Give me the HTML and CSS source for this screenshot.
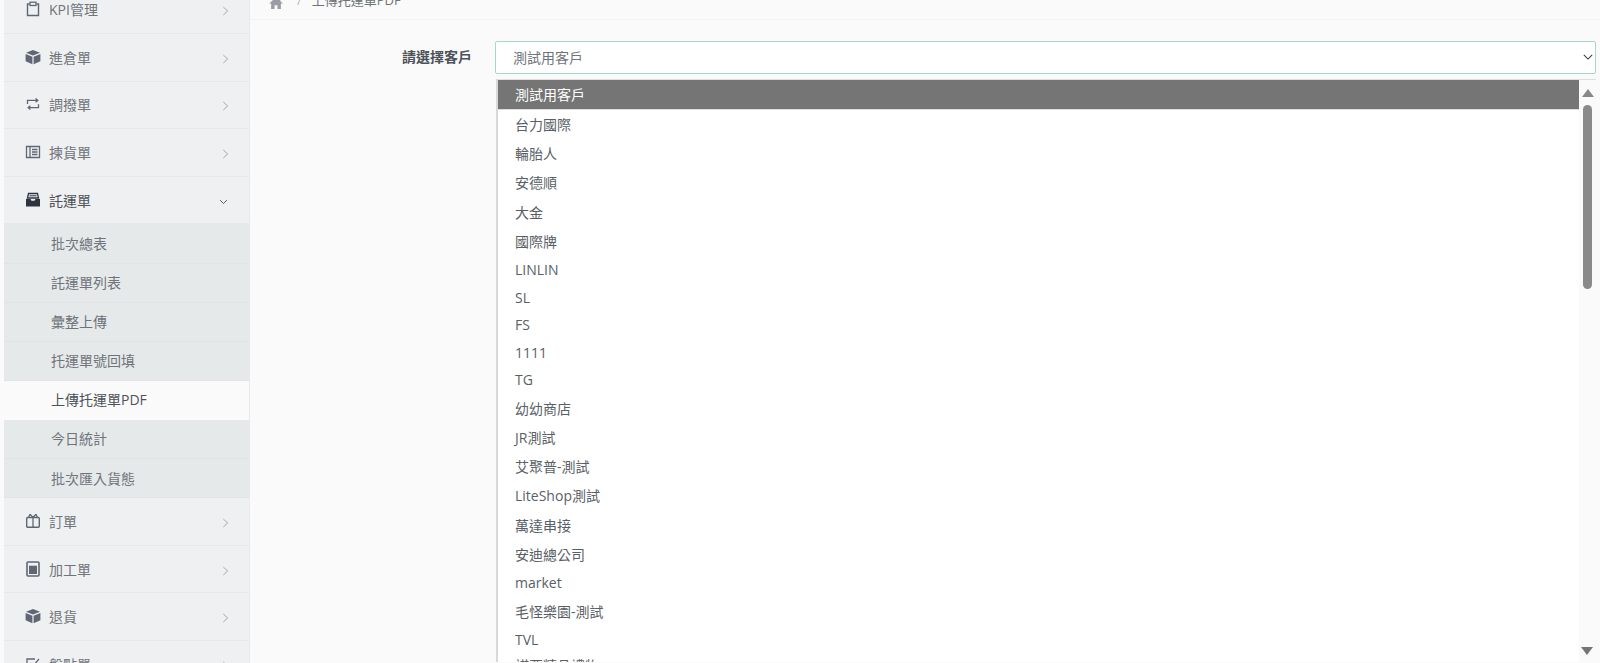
FILE: index.html
```html
<!DOCTYPE html>
<html lang="zh-Hant">
<head>
<meta charset="utf-8">
<title>上傳托運單PDF</title>
<link rel="stylesheet" href="styles.css">
</head>
<body>
<div class="app">
  <aside class="sidebar">
    <div class="menu">
      <a class="item"><svg class="ico" viewBox="0 0 16 16"><path d="M4.500 3H2.500v11.500h11V3h-2" fill="none" stroke="currentColor" stroke-width="1.400"/><rect x="5" y="1.200" width="6" height="3.300" fill="none" stroke="currentColor" stroke-width="1.300"/></svg><span class="lab">KPI管理</span><svg class="chev" viewBox="0 0 8 12"><path d="M1.500 1.500 6.500 6l-5 4.500"/></svg></a>
      <a class="item"><svg class="ico" viewBox="0 0 16 16"><path d="M8 1 15 3.800 8 6.600 1 3.800zM.6 5l6.800 2.800v7.400L.6 12.300zM15.400 5 8.600 7.800v7.400l6.800-2.900z" fill="currentColor"/></svg><span class="lab">進倉單</span><svg class="chev" viewBox="0 0 8 12"><path d="M1.500 1.500 6.500 6l-5 4.500"/></svg></a>
      <a class="item"><svg class="ico" viewBox="0 0 16 16"><path d="M2.500 8V4.400h10M10.600 2.600l2.200 1.800-2.200 1.800M13.500 8.200v3.400h-10M5.400 9.800l-2.200 1.800 2.200 1.800" fill="none" stroke="currentColor" stroke-width="1.300"/></svg><span class="lab">調撥單</span><svg class="chev" viewBox="0 0 8 12"><path d="M1.500 1.500 6.500 6l-5 4.500"/></svg></a>
      <a class="item"><svg class="ico" viewBox="0 0 16 16"><path d="M5 2.500h9.500v11H5zM5 2.500H1.500v11H5M7 5.500h5.500M7 8h5.500M7 10.500h5.500" fill="none" stroke="currentColor" stroke-width="1.300"/></svg><span class="lab">揀貨單</span><svg class="chev" viewBox="0 0 8 12"><path d="M1.500 1.500 6.500 6l-5 4.500"/></svg></a>
      <a class="item open"><svg class="ico" viewBox="0 0 16 16"><path d="M3.500 1.500h9l1 4.500h-11z" fill="none" stroke="currentColor" stroke-width="1.300"/><path d="M1 7h4.500l1 1.800h3l1-1.800H15v7.500H1z" fill="currentColor"/><path d="M4.500 3.800h7" stroke="currentColor" stroke-width="1"/></svg><span class="lab">託運單</span><svg class="chev down" viewBox="0 0 12 8"><path d="M1.500 1.500 6 6l4.500-4.500"/></svg></a>
      <div class="sub">
        <a class="subitem">批次總表</a>
        <a class="subitem">託運單列表</a>
        <a class="subitem">彙整上傳</a>
        <a class="subitem">托運單號回填</a>
        <a class="subitem active">上傳托運單PDF</a>
        <a class="subitem">今日統計</a>
        <a class="subitem">批次匯入貨態</a>
      </div>
      <a class="item"><svg class="ico" viewBox="0 0 16 16"><rect x="1.700" y="4.500" width="12.600" height="9.800" rx="1" fill="none" stroke="currentColor" stroke-width="1.400"/><path d="M8 3v11.300M8 4.500 5 1.300M8 4.500l3-3.200M5 1.300 3.500 4.500M11 1.300l1.500 3.200" fill="none" stroke="currentColor" stroke-width="1.300"/></svg><span class="lab">訂單</span><svg class="chev" viewBox="0 0 8 12"><path d="M1.500 1.500 6.500 6l-5 4.500"/></svg></a>
      <a class="item"><svg class="ico" viewBox="0 0 16 16"><rect x="2" y="1" width="12" height="14" rx="1" fill="none" stroke="currentColor" stroke-width="1.600"/><rect x="4" y="4.700" width="8" height="8.300" fill="currentColor"/></svg><span class="lab">加工單</span><svg class="chev" viewBox="0 0 8 12"><path d="M1.500 1.500 6.500 6l-5 4.500"/></svg></a>
      <a class="item"><svg class="ico" viewBox="0 0 16 16"><path d="M8 1 15 3.800 8 6.600 1 3.800zM.6 5l6.800 2.800v7.400L.6 12.300zM15.400 5 8.600 7.800v7.400l6.800-2.900z" fill="currentColor"/></svg><span class="lab">退貨</span><svg class="chev" viewBox="0 0 8 12"><path d="M1.500 1.500 6.500 6l-5 4.500"/></svg></a>
      <a class="item"><svg class="ico" viewBox="0 0 16 16"><path d="M13 9v5H2V3h8" fill="none" stroke="currentColor" stroke-width="1.300"/><path d="M5 7l3 3 6-7" fill="none" stroke="currentColor" stroke-width="1.300"/></svg><span class="lab">盤點單</span><svg class="chev" viewBox="0 0 8 12"><path d="M1.500 1.500 6.500 6l-5 4.500"/></svg></a>
    </div>
  </aside>
  <main class="main">
    <nav class="crumb">
      <svg class="home" viewBox="0 0 16 14"><path d="M8 .5 0 7.500h2.300V14h4V9.500h3.400V14h4V7.500H16L13 4.800V1.500h-2v1.500z" fill="currentColor"/></svg>
      <span class="sep">/</span>
      <span class="cur">上傳托運單PDF</span>
    </nav>
    <section class="form">
      <label class="flabel">請選擇客戶</label>
      <div class="field">
        <div class="select"><span>測試用客戶</span><svg class="caret" viewBox="0 0 12 8"><path d="M1 1.500 6 6.500l5-5"/></svg></div>
        <div class="popup">
          <ul class="list">
            <li class="opt sel">測試用客戶</li>
            <li class="opt">台力國際</li>
            <li class="opt">輪胎人</li>
            <li class="opt">安德順</li>
            <li class="opt">大金</li>
            <li class="opt">國際牌</li>
            <li class="opt lat">LINLIN</li>
            <li class="opt lat">SL</li>
            <li class="opt lat">FS</li>
            <li class="opt lat">1111</li>
            <li class="opt lat">TG</li>
            <li class="opt">幼幼商店</li>
            <li class="opt">JR測試</li>
            <li class="opt">艾聚普-測試</li>
            <li class="opt">LiteShop測試</li>
            <li class="opt">萬達串接</li>
            <li class="opt">安迪總公司</li>
            <li class="opt lat">market</li>
            <li class="opt">毛怪樂園-測試</li>
            <li class="opt lat">TVL</li>
            <li class="opt peek">諾亞精品禮物</li>
          </ul>
          <div class="scroll">
            <span class="arrow up"></span>
            <span class="thumb"></span>
            <span class="arrow dn"></span>
          </div>
        </div>
      </div>
    </section>
  </main>
</div>
</body>
</html>
```
FILE: styles.css
```css
* { box-sizing: border-box; }
html, body { margin: 0; height: 100%; overflow: hidden; }
body {
  background: #fafafa;
  color: #4d5259;
  font-family: "Open Sans", "Noto Sans CJK TC", sans-serif;
  font-size: 14px;
}
.app { display: flex; height: 663px; overflow: hidden; }
.sidebar {
  width: 250px;
  flex: none;
  padding-left: 4px;
  background: #fafafa;
  overflow: hidden;
}
.menu {
  margin-top: -13.500px;
  background: #eff0f2;
  border-right: 1px solid #e7e9eb;
}
.item {
  display: flex;
  align-items: center;
  height: 47.600px;
  padding: 0 20px 1px 21px;
  border-bottom: 1px solid #e7e8ea;
  color: #6f747a;
}
.ico { width: 16px; height: 16px; color: #5f6775; flex: none; }
.open .ico { color: #2c3441; }
.lab { margin-left: 8px; flex: 1; font-size: 14px; }
.open .lab { color: #4d5259; }
.chev { width: 7px; height: 12px; fill: none; stroke: #9a9ea3; stroke-width: 1; margin-top: 4px; }
.chev.down { width: 9px; height: 6px; stroke: #555b62; stroke-width: 1.300; margin-right: 1px; }
.sub { background: #e6e9ea; }
.subitem {
  display: flex;
  align-items: center;
  height: 39.100px;
  padding: 0 0 1px 47px;
  border-bottom: 1px solid #e1e4e5;
  color: #6f747a;
}
.subitem.active { background: #fafafa; color: #4d5259; border-bottom-color: #fafafa; }
.main { flex: 1; min-width: 0; }
.crumb {
  display: flex;
  align-items: flex-start;
  height: 20px;
  padding: 0 0 16px 19px;
  border-bottom: 1px solid #f3f3f3;
}
.home { width: 14px; height: 12px; color: #9a9ea3; margin-top: -3px; flex: none; }
.sep { margin: -9px 10px 0 14px; color: #b5b8bb; font-size: 13px; }
.cur { margin-top: -10px; font-size: 13px; color: #6f747a; white-space: nowrap; }
.form { display: flex; padding: 21px 4px 0 0; }
.flabel {
  width: 222px;
  padding: 5px 0 0;
  text-align: right;
  font-weight: 600;
  color: #4d5259;
  flex: none;
}
.field { margin-left: 23px; flex: 1; min-width: 0; }
.select {
  display: flex;
  align-items: center;
  justify-content: space-between;
  height: 33px;
  padding: 0 2px 1px 17px;
  background: #fff;
  border: 1px solid #a6d8c8;
  border-radius: 2px;
  color: #6f747a;
}
.caret { width: 10px; height: 8px; fill: none; stroke: #3a3f45; stroke-width: 1.300; }
.popup {
  display: flex;
  height: 583px;
  margin: 5px 0 0 1px;
  background: #fff;
  border-top: 1px solid #dedede;
  border-left: 2px solid #d9d9d9;
  overflow: hidden;
}
.list { flex: 1; min-width: 0; margin: 0; padding: 0; list-style: none; }
.opt { height: 29.250px; padding: 0 17px; color: #5a5f66; line-height: 29.200px; }
.opt.lat { height: 27.500px; line-height: 27.500px; }
.opt.sel { height: 29.800px; background: #757575; color: #fff; border-bottom: 1px solid #dcdcdc; }
.opt.peek { line-height: 26px; }
.scroll {
  position: relative;
  flex: none;
  width: 17px;
  background: #fafafa;
  display: flex;
  flex-direction: column;
  align-items: center;
}
.arrow { width: 0; height: 0; border-left: 6px solid transparent; border-right: 6px solid transparent; }
.arrow.up { margin-top: 9px; border-bottom: 8px solid #888; }
.arrow.dn { position: absolute; top: 567px; left: 2px; border-top: 8px solid #757575; }
.thumb { width: 9px; height: 184px; margin-top: 8px; border-radius: 5px; background: #8a8a8a; }
```
